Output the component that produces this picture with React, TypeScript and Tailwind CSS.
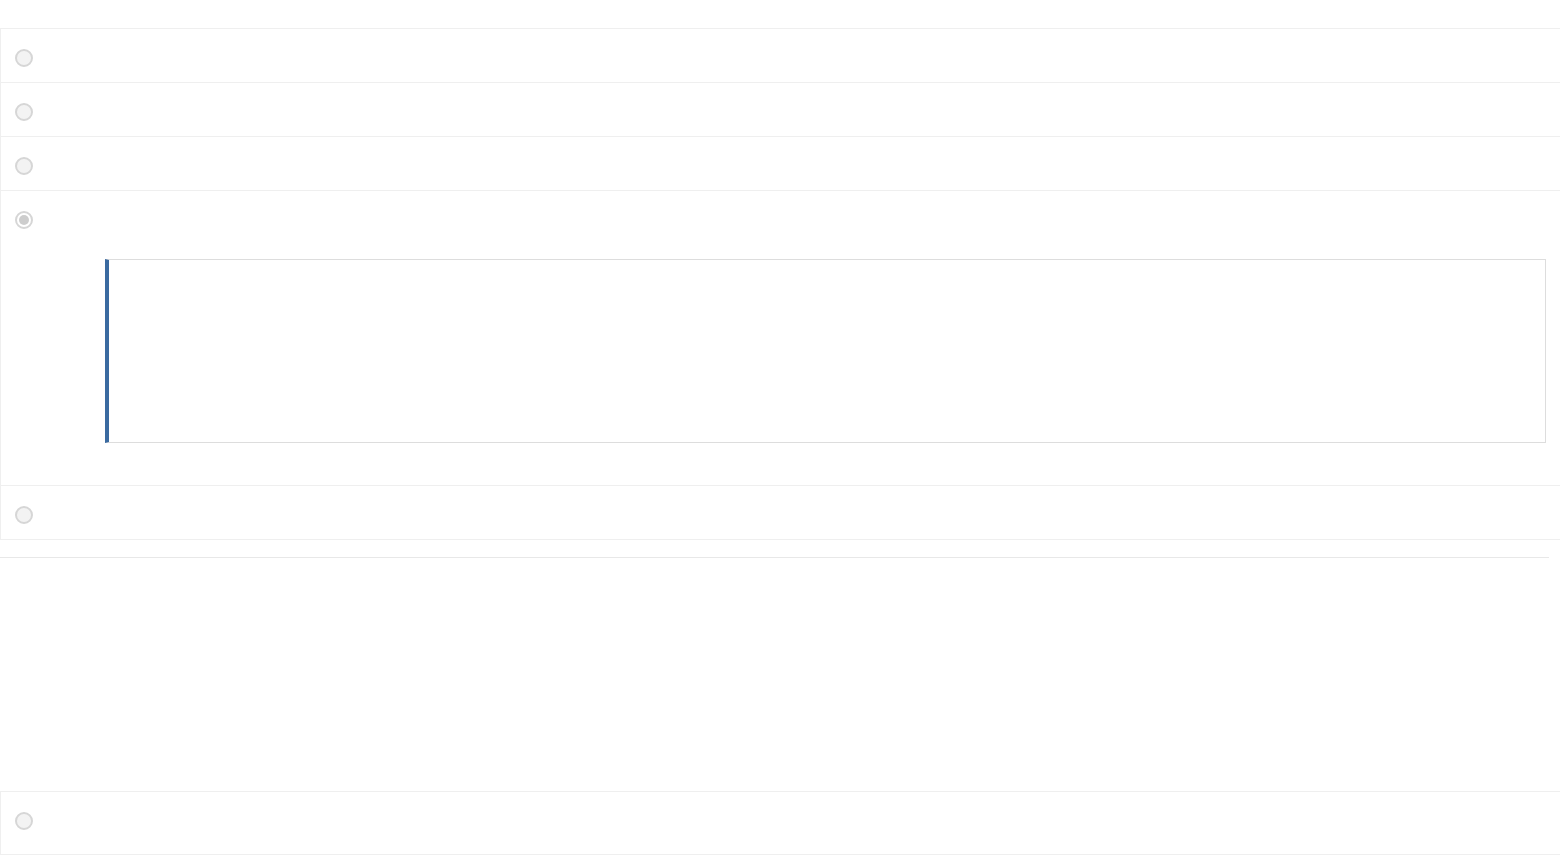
const Radio = ({ checked = false }: { checked?: boolean }) => (
  <span
    className={
      "flex h-[18px] w-[18px] shrink-0 items-center justify-center rounded-full border-2 border-[#d6d6d6] " +
      (checked ? "bg-white" : "bg-[#f3f3f3]")
    }
  >
    {checked && <span className="h-[10px] w-[10px] rounded-full bg-[#cdcdcd]" />}
  </span>
);

function Row({ checked = false, children }: { checked?: boolean; children?: React.ReactNode }) {
  return (
    <div className="border-b border-[#efefef] px-[14px] pt-[20px] pb-[15px] last:border-b-0">
      <Radio checked={checked} />
      {children}
    </div>
  );
}

export default function App() {
  return (
    <div className="min-h-[855px] w-full bg-white font-['Liberation_Sans',sans-serif]">
      <div className="h-[28px]" />
      <div className="w-[1562px] border border-[#efefef]">
        <Row />
        <Row />
        <Row />
        <Row checked>
          <div className="mt-[30px] mb-[27px] ml-[90px] flex h-[184px] w-[1441px] border border-l-4 border-[#dddddd] border-l-[#3a6aa0] bg-white" />
        </Row>
        <Row />
      </div>
      <div className="mt-[17px] h-px w-[1549px] bg-[#e8e8e8]" />
      <div className="h-[233px]" />
      <div className="w-[1562px] border border-[#efefef]">
        <div className="h-[62px] px-[14px] pt-[20px]">
          <Radio />
        </div>
      </div>
    </div>
  );
}
